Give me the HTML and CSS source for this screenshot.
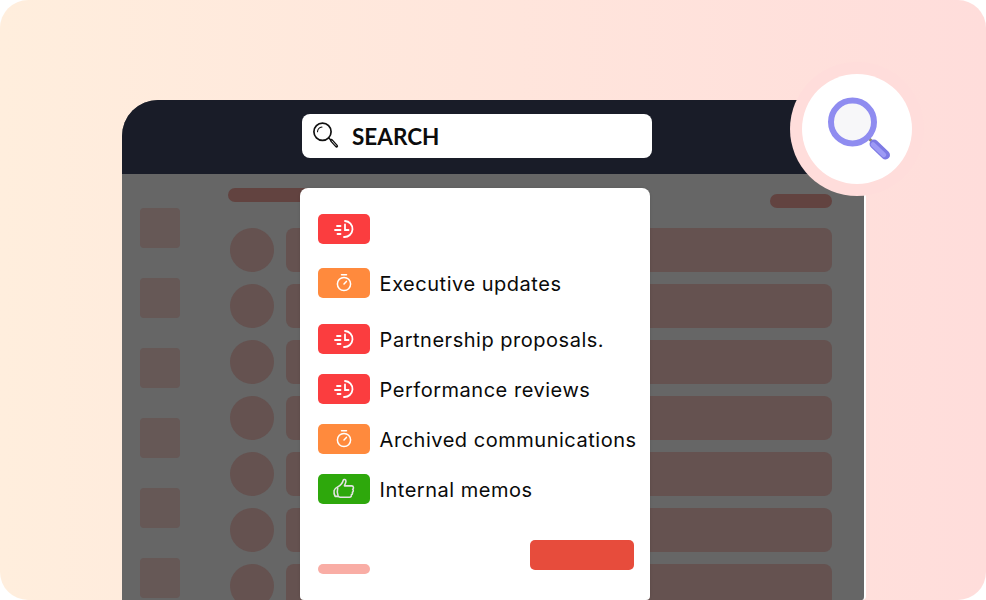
FILE: index.html
```html
<!DOCTYPE html>
<html lang="en">
<head>
<meta charset="utf-8">
<title>Search</title>
<link rel="stylesheet" href="styles.css">
</head>
<body>
<main class="stage">
  <section class="window">
    <header class="window-head"></header>
    <div class="window-body">
      <aside class="side">
        <div class="tile"></div><div class="tile"></div><div class="tile"></div><div class="tile"></div><div class="tile"></div><div class="tile"></div>
      </aside>
      <div class="content">
        <div class="top">
          <div class="pill pill-left"></div>
          <div class="pill pill-right"></div>
        </div>
        <div class="list">
          <div class="item"><div class="avatar"></div><div class="bar"></div></div>
          <div class="item"><div class="avatar"></div><div class="bar"></div></div>
          <div class="item"><div class="avatar"></div><div class="bar"></div></div>
          <div class="item"><div class="avatar"></div><div class="bar"></div></div>
          <div class="item"><div class="avatar"></div><div class="bar"></div></div>
          <div class="item"><div class="avatar"></div><div class="bar"></div></div>
          <div class="item"><div class="avatar"></div><div class="bar"></div></div>
        </div>
      </div>
    </div>
  </section>

  <div class="search">
    <svg class="search-icon" width="28" height="28" viewBox="0 0 28 28" fill="none" stroke="#111" stroke-linecap="round">
      <circle cx="10.500" cy="9.800" r="8.600" stroke-width="1.700"/>
      <path d="M5.500 9.800a5.200 5.200 0 0 1 4.500-4.800" stroke-width="1.100"/>
      <path d="M16.800 16l2 2" stroke-width="1.500"/>
      <path d="M19.500 18.500l5 5.500" stroke-width="3.200"/>
      <path d="M20 19l4 4.500" stroke="#fff" stroke-width=".8"/>
    </svg>
    <span class="search-label">SEARCH</span>
  </div>

  <section class="popup">
    <div class="row row-a">
      <span class="badge badge-red">
        <svg class="glyph" viewBox="0 0 24 20" fill="none" stroke="#fff" stroke-width="1.800" stroke-linecap="round"><path d="M13 2a8 8 0 1 1-1 16"/><path d="M13 5.500V11h3.500"/><path d="M5 7h3.500M3 11h5.500M5.500 15h3"/></svg>
      </span>
    </div>
    <div class="row row-b">
      <span class="badge badge-orange">
        <svg class="glyph" viewBox="0 0 24 20" fill="none" stroke="#fff" stroke-width="1.500" stroke-linecap="round"><circle cx="12" cy="11" r="6.600"/><path d="M9.500 1.700h5M12 11l2.400-2.600"/></svg>
      </span>
      <span class="label">Executive updates</span>
    </div>
    <div class="row">
      <span class="badge badge-red">
        <svg class="glyph" viewBox="0 0 24 20" fill="none" stroke="#fff" stroke-width="1.800" stroke-linecap="round"><path d="M13 2a8 8 0 1 1-1 16"/><path d="M13 5.500V11h3.500"/><path d="M5 7h3.500M3 11h5.500M5.500 15h3"/></svg>
      </span>
      <span class="label">Partnership proposals.</span>
    </div>
    <div class="row">
      <span class="badge badge-red">
        <svg class="glyph" viewBox="0 0 24 20" fill="none" stroke="#fff" stroke-width="1.800" stroke-linecap="round"><path d="M13 2a8 8 0 1 1-1 16"/><path d="M13 5.500V11h3.500"/><path d="M5 7h3.500M3 11h5.500M5.500 15h3"/></svg>
      </span>
      <span class="label">Performance reviews</span>
    </div>
    <div class="row">
      <span class="badge badge-orange">
        <svg class="glyph" viewBox="0 0 24 20" fill="none" stroke="#fff" stroke-width="1.500" stroke-linecap="round"><circle cx="12" cy="11" r="6.600"/><path d="M9.500 1.700h5M12 11l2.400-2.600"/></svg>
      </span>
      <span class="label">Archived communications</span>
    </div>
    <div class="row">
      <span class="badge badge-green">
        <svg class="glyph glyph-thumb" viewBox="0 0 24 24" fill="none" stroke="#e4e4e4" stroke-width="1.500" stroke-linejoin="round" stroke-linecap="round"><path d="M2 13c.3-1.800 2-2.700 3.500-3.500 2.200-1.200 4.500-3.200 5.300-6.400.3-1.200 2.700-1 2.600 1-.1 1.500-.8 3-1.500 4.400h7c2 0 2.200 2.700.9 3.200 1 .8.800 2.500-.3 2.900.5 1 .1 2.200-.9 2.500.2 1.200-.4 2.400-1.800 2.400H8.500c-1.500 0-1.800-.9-3.500-.9H3c-1-2-1.300-3.800-1-5.600z"/><path d="M5.500 10.500c-.7 2.800-.5 5.300.3 7.200"/></svg>
      </span>
      <span class="label">Internal memos</span>
    </div>
    <div class="popup-foot">
      <div class="foot-chip"></div>
      <div class="foot-button"></div>
    </div>
  </section>

  <div class="lens">
    <div class="lens-inner">
      <svg width="70" height="72" viewBox="0 0 70 72" fill="none">
        <path d="M43.500 44l4 4" stroke="#8a8a6e" stroke-width="3"/>
        <circle cx="28.500" cy="29" r="21.500" fill="#f7f7f9" stroke="#8f8cf0" stroke-width="6"/>
        <path d="M50 51l11.500 11" stroke="#7d7ae4" stroke-width="9" stroke-linecap="round"/>
        <path d="M49 51.500l11 10.500" stroke="#9d9af5" stroke-width="4.500" stroke-linecap="round"/>
      </svg>
    </div>
  </div>
</main>
</body>
</html>
```

FILE: styles.css
```css
* { box-sizing: border-box; }

html, body {
  margin: 0;
  height: 100%;
  background: #fff;
}

.stage {
  position: relative;
  width: 986px;
  height: 600px;
  overflow: hidden;
  border-radius: 28px;
  padding: 100px 0 0 122px;
  background: linear-gradient(90deg, #ffeedd 0%, #ffdddb 100%);
  font-family: Inter, "Liberation Sans", sans-serif;
}

.window {
  width: 744px;
  height: 500px;
  overflow: hidden;
  border-right: 2px solid #fff;
  border-radius: 36px 36px 4px 0;
  background: #666;
}

.window-head {
  height: 74px;
  background: #191c28;
}

.window-body {
  display: flex;
  padding: 14px 32px 0 18px;
}

.side {
  display: flex;
  flex-direction: column;
  gap: 30px;
  width: 40px;
  margin-top: 20px;
  margin-right: 48px;
}

.tile {
  flex: none;
  height: 40px;
  border-radius: 4px;
  background: #665856;
}

.content {
  flex: 1;
  min-width: 0;
}

.top {
  display: flex;
  justify-content: space-between;
  height: 40px;
}

.pill {
  height: 14px;
  border-radius: 7px;
  background: #624340;
}

.pill-left { width: 120px; }

.pill-right {
  width: 62px;
  margin-top: 6px;
}

.list {
  display: flex;
  flex-direction: column;
  gap: 12px;
  padding-left: 2px;
}

.item {
  display: flex;
  flex: none;
  gap: 12px;
}

.avatar {
  flex: none;
  width: 44px;
  height: 44px;
  border-radius: 50%;
  background: #655250;
}

.bar {
  flex: 1;
  height: 44px;
  border-radius: 8px;
  background: #655250;
}

.search {
  position: absolute;
  left: 302px;
  top: 114px;
  display: flex;
  align-items: center;
  width: 350px;
  height: 44px;
  padding-left: 10px;
  border-radius: 8px;
  background: #fff;
}

.search-icon { flex: none; }

.search-label {
  margin-left: 12px;
  font-family: Lato, "Liberation Sans", sans-serif;
  font-size: 22.5px;
  font-weight: 700;
  color: #0c0c0c;
}

.popup {
  position: absolute;
  left: 300px;
  top: 188px;
  display: flex;
  flex-direction: column;
  width: 350px;
  height: 412px;
  padding: 26px 16px 0 18px;
  border-radius: 8px 8px 4px 4px;
  background: #fff;
  box-shadow: 0 0 3px rgba(0, 0, 0, .12);
}

.row {
  display: flex;
  flex: none;
  align-items: center;
  gap: 9.6px;
  height: 30px;
  margin-bottom: 20px;
}

.row-a { margin-bottom: 24px; }
.row-b { margin-bottom: 26px; }

.badge {
  display: flex;
  flex: none;
  align-items: center;
  justify-content: center;
  width: 52px;
  height: 30px;
  border-radius: 5px;
}

.badge-red { background: #fb3d3f; }
.badge-orange { background: #ff8a3d; }
.badge-green { background: #2ea80c; }

.glyph {
  width: 24px;
  height: 20px;
}

.glyph-thumb {
  width: 25px;
  height: 25px;
}

.label {
  padding-top: 2px;
  font-size: 20px;
  letter-spacing: .52px;
  line-height: 30px;
  white-space: nowrap;
  color: #0a0a0a;
}

.popup-foot {
  display: flex;
  justify-content: space-between;
  height: 34px;
  margin-top: 16px;
}

.foot-chip {
  align-self: flex-end;
  width: 52px;
  height: 10px;
  border-radius: 5px;
  background: #f9ada5;
}

.foot-button {
  width: 104px;
  height: 30px;
  border-radius: 5px;
  background: #e74c3c;
}

.lens {
  position: absolute;
  left: 790px;
  top: 62px;
  width: 134px;
  height: 134px;
  padding: 12px;
  border-radius: 50%;
  background: #ffdddb;
}

.lens-inner {
  width: 110px;
  height: 110px;
  padding: 19px 0 0 22px;
  border-radius: 50%;
  background: #fff;
}

.lens-inner svg { display: block; }
```
